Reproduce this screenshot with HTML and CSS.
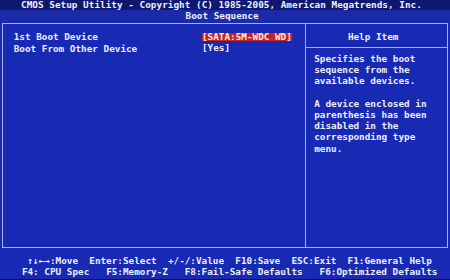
FILE: index.html
```html
<!DOCTYPE html>
<html>
<head>
<meta charset="utf-8">
<link rel="stylesheet" href="styles.css">
</head>
<body>
<div class="screen">
  <div class="title">CMOS Setup Utility - Copyright (C) 1985-2005, American Megatrends, Inc.</div>
  <div class="subtitle">Boot Sequence</div>
  <div class="box">
    <div class="main">
      <div class="row"><span class="label">1st Boot Device</span><span class="value selected">[SATA:5M-WDC WD]</span></div>
      <div class="row"><span class="label">Boot From Other Device</span><span class="value">[Yes]</span></div>
    </div>
    <div class="help">
      <div class="help-head">Help Item</div>
      <div class="help-body">
        <p>Specifies the boot<br>sequence from the<br>available devices.</p>
        <p>A device enclosed in<br>parenthesis has been<br>disabled in the<br>corresponding type<br>menu.</p>
      </div>
    </div>
  </div>
  <div class="footer">
    <div class="keys keys-1">↑↓←→:Move  Enter:Select  +/-/:Value  F10:Save  ESC:Exit  F1:General Help</div>
    <div class="keys keys-2">F4: CPU Spec   F5:Memory-Z   F8:Fail-Safe Defaults   F6:Optimized Defaults</div>
  </div>
</div>
</body>
</html>
```
FILE: styles.css
```css
html, body {
  margin: 0;
  padding: 0;
  background: #0b1152;
}

.screen {
  width: 450px;
  height: 278.5px;
  background: #1829b3;
  color: #eef0ff;
  font-family: "DejaVu Sans Mono", monospace;
  font-weight: bold;
  font-size: 9.34px;
  display: flex;
  flex-direction: column;
  overflow: hidden;
}

.title {
  height: 9.5px;
  line-height: 9.5px;
  padding-left: 21px;
  background: #0e186e;
  white-space: pre;
  letter-spacing: 0.03px;
}

.subtitle {
  height: 11.2px;
  line-height: 11.2px;
  padding-left: 185.6px;
  background: #1a2aa8;
  white-space: pre;
}

.box {
  margin: 2.2px 2.3px 0;
  border: 1.4px solid #aab4e6;
  height: 223.3px;
  display: flex;
}

.main {
  width: 302.1px;
  padding: 7.6px 0 0 10.4px;
  box-sizing: border-box;
}

.row {
  height: 11.2px;
  line-height: 11.2px;
  display: flex;
  align-items: center;
  white-space: pre;
}

.label {
  width: 188.3px;
  flex: none;
}

.value {
  display: inline-block;
  height: 8.4px;
  line-height: 8.4px;
}

.selected {
  background: #c8211e;
  color: #ffe9e6;
}

.help {
  flex: 1;
  border-left: 1.4px solid #aab4e6;
  display: flex;
  flex-direction: column;
}

.help-head {
  padding: 7.6px 0 4.2px 41.5px;
  line-height: 11.2px;
  height: 11.2px;
  border-bottom: 1.4px solid #aab4e6;
  white-space: pre;
}

.help-body {
  padding: 5.2px 0 0 7.8px;
  line-height: 11.2px;
}

.help-body p {
  margin: 0 0 11.2px;
  white-space: pre;
}

.footer {
  margin-top: 6.9px;
  display: flex;
  flex-direction: column;
}

.keys {
  height: 11.2px;
  line-height: 11.2px;
  white-space: pre;
}

.keys-1 {
  padding-left: 27.5px;
}

.keys-2 {
  padding-left: 21.9px;
}
```
